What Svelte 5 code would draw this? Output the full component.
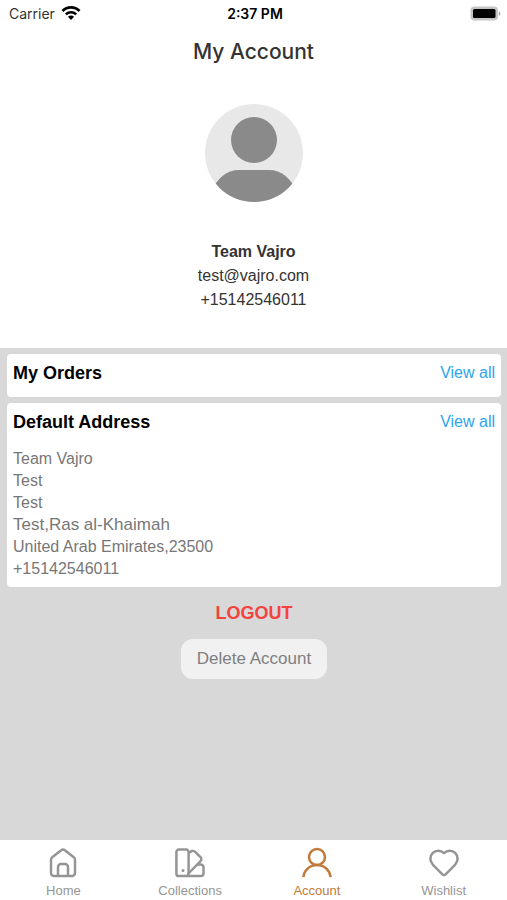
<script lang="ts">
  const user = {
    name: 'Team Vajro',
    email: 'test@vajro.com',
    phone: '+15142546011',
  };

  const address = {
    name: 'Team Vajro',
    street: 'Test',
    unit: 'Test',
    city: 'Test,Ras al-Khaimah',
    country: 'United Arab Emirates,23500',
    phone: '+15142546011',
  };

  const tabs = ['Home', 'Collections', 'Account', 'Wishlist'];
  let active = $state('Account');
</script>

<div class="screen">
  <div class="status">
    <div class="carrier">
      <span>Carrier</span>
      <svg width="20" height="14" viewBox="0 0 20 14" fill="none" stroke="#000">
        <path d="M1.5 5a12 12 0 0 1 17 0" stroke-width="2.7" />
        <path d="M4.8 8.3a7.5 7.5 0 0 1 10.4 0" stroke-width="2.5" />
        <path d="M10 14 6.9 10.8a4.6 4.6 0 0 1 6.2 0z" fill="#000" stroke="none" />
      </svg>
    </div>
    <time>2:37 PM</time>
    <svg class="battery" width="31" height="15" viewBox="0 0 31 15">
      <rect x="0.5" y="0.5" width="27.5" height="14" rx="4" fill="#c4c4c4" />
      <rect x="3" y="3" width="22.5" height="9" rx="1.5" fill="#000" />
      <path d="M28.8 5.2c2.2.8 2.2 3.8 0 4.6z" fill="#aaa" />
    </svg>
  </div>

  <header>
    <h1>My Account</h1>
    <svg class="avatar" width="98" height="98" viewBox="0 0 98 98">
      <defs>
        <clipPath id="round"><circle cx="49" cy="49" r="49" /></clipPath>
      </defs>
      <g clip-path="url(#round)">
        <rect width="98" height="98" fill="#e8e8e8" />
        <circle cx="49" cy="36" r="23" fill="#8a8a8a" />
        <path d="M6 98V88C12 74 22 66 34 66h30c12 0 22 8 28 22v10z" fill="#8a8a8a" />
      </g>
    </svg>
    <p class="name">{user.name}</p>
    <p>{user.email}</p>
    <p>{user.phone}</p>
  </header>

  <main>
    <section class="card">
      <div class="row">
        <h2>My Orders</h2>
        <a href="#orders">View all</a>
      </div>
    </section>

    <section class="card">
      <div class="row">
        <h2>Default Address</h2>
        <a href="#addresses">View all</a>
      </div>
      <address>
        <div>{address.name}</div>
        <div>{address.street}</div>
        <div>{address.unit}</div>
        <div class="city">{address.city}</div>
        <div>{address.country}</div>
        <div>{address.phone}</div>
      </address>
    </section>

    <div class="actions">
      <button class="logout">LOGOUT</button>
      <button class="delete">Delete Account</button>
    </div>
  </main>

  <nav>
    {#each tabs as tab}
      <button class="tab" class:active={active === tab} onclick={() => (active = tab)}>
        <svg width="32" height="32" viewBox="0 0 32 32" fill="none" stroke="currentColor" stroke-width="2.5" stroke-linejoin="round">
          {#if tab === 'Home'}
            <path d="M4 12.6c0-1 .4-1.7 1.2-2.3l9-7.1c1.1-.9 2.5-.9 3.6 0l9 7.1c.8.6 1.2 1.3 1.2 2.3v13.5a3 3 0 0 1-3 3H7a3 3 0 0 1-3-3z" />
            <path d="M11 29V20a3 3 0 0 1 3-3h4a3 3 0 0 1 3 3v9" />
          {:else if tab === 'Collections'}
            <path d="M4.8 2.6h7.4a2.4 2.4 0 0 1 2.4 2.4v21.7a2.4 2.4 0 0 1-2.4 2.4H4.8a2.4 2.4 0 0 1-2.4-2.4V5a2.4 2.4 0 0 1 2.4-2.4z" />
            <path d="M14.6 6.3l2.1-1.6a3.2 3.2 0 0 1 4.5.2l5.3 5.3a2.8 2.8 0 0 1 0 4L14 27" />
            <path d="M23.5 17.5h3.2a2.8 2.8 0 0 1 2.8 2.8v6a2.8 2.8 0 0 1-2.8 2.8H12" />
            <circle cx="9" cy="23.6" r="1.5" fill="currentColor" stroke="none" />
          {:else if tab === 'Account'}
            <circle cx="16" cy="10" r="8" />
            <path d="M2.4 30.2C3 23.5 8.5 18 16 18s13 5.5 13.600 12.200" />
          {:else}
            <path d="M16 6.200C12.500 2.800 7.800 3 4.800 5.900c-3.300 3.300-3.200 8.500.2 11.900l9.400 9.600c1 .9 2.200.9 3.200 0l9.400-9.600c3.400-3.400 3.500-8.600.2-11.900C24.200 3 19.500 2.800 16 6.200z" />
          {/if}
        </svg>
        <span>{tab}</span>
      </button>
    {/each}
  </nav>
</div>

<style>
  :global(body) {
    background: #fff;
  }
  .screen {
    min-height: 100vh;
    display: flex;
    flex-direction: column;
    font-family: 'Liberation Sans', Arial, sans-serif;
    color: #333;
  }
  h1,
  h2,
  p {
    margin: 0;
  }
  button {
    border: none;
    background: none;
    padding: 0;
    font-family: inherit;
    cursor: pointer;
  }
  .status {
    display: grid;
    grid-template-columns: 1fr auto 1fr;
    align-items: center;
    height: 26px;
    padding: 0 6px 0 9px;
    font-family: Inter, sans-serif;
    font-size: 14px;
  }
  .carrier {
    display: flex;
    align-items: center;
    gap: 6px;
  }
  time {
    color: #000;
    font-weight: 600;
  }
  .battery {
    justify-self: end;
  }
  header {
    display: flex;
    flex-direction: column;
    align-items: center;
    padding: 10px 8px 36px;
    font-size: 16px;
    line-height: 24px;
  }
  h1 {
    font-family: Inter, sans-serif;
    font-size: 21px;
    font-weight: 500;
    line-height: 32px;
  }
  .avatar {
    margin: 36px 0 38px;
  }
  .name {
    font-weight: bold;
  }
  main {
    flex: 1;
    display: flex;
    flex-direction: column;
    gap: 6px;
    padding: 6px 6px 6px 7px;
    background: #d8d8d8;
  }
  .card {
    padding: 7px 6px 6px;
    border-radius: 4px;
    background: #fff;
  }
  .row {
    display: flex;
    justify-content: space-between;
    align-items: center;
    line-height: 24px;
    padding-bottom: 6px;
  }
  h2 {
    font-size: 18px;
    color: #000;
  }
  .row a {
    font-size: 16px;
    color: #2ba5ef;
    text-decoration: none;
  }
  address {
    padding: 8px 0 1px;
    font-size: 16px;
    font-style: normal;
    line-height: 22px;
    color: #777;
  }
  .city {
    font-size: 17px;
  }
  .actions {
    display: flex;
    flex-direction: column;
    align-items: center;
    gap: 14px;
    padding-top: 8px;
  }
  .logout {
    font-size: 18px;
    font-weight: bold;
    line-height: 24px;
    color: #f4433c;
  }
  .delete {
    padding: 8px 16px;
    border-radius: 12px;
    background: #f1f1f1;
    font-size: 17px;
    line-height: 24px;
    color: #808080;
  }
  nav {
    display: grid;
    grid-template-columns: repeat(4, 1fr);
    background: #fff;
  }
  .tab {
    display: flex;
    flex-direction: column;
    align-items: center;
    gap: 4px;
    padding: 7px 0 1px;
    font-size: 13px;
    line-height: 16px;
    color: #959595;
  }
  .tab.active {
    color: #c27a3a;
  }
</style>
